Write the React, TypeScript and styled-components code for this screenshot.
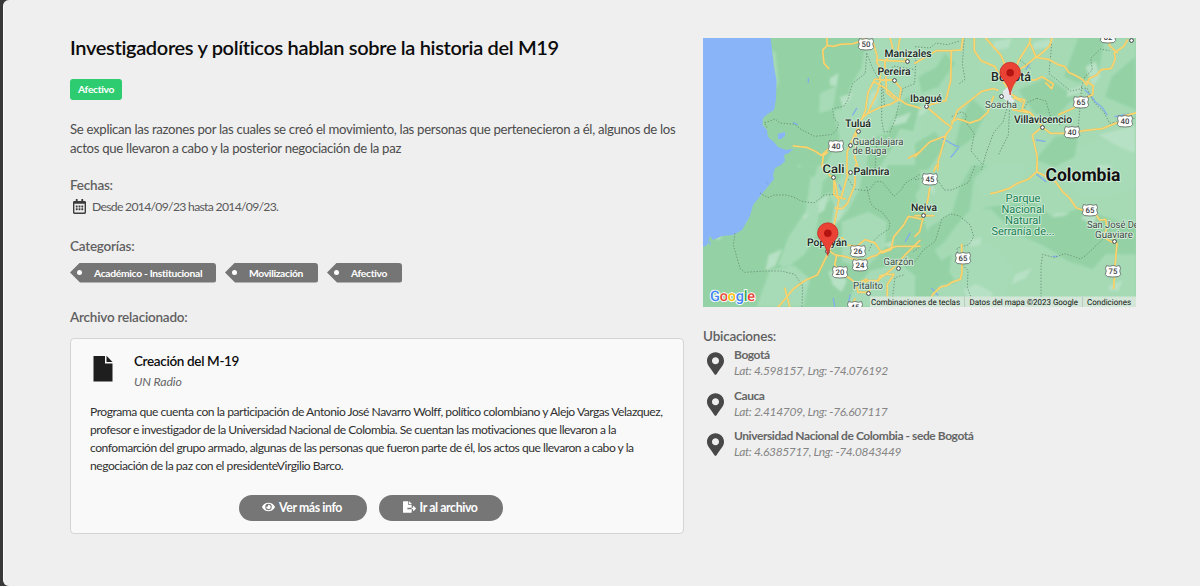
import React from "react";
import styled, { createGlobalStyle } from "styled-components";
import { FaEye, FaFileExport, FaMapMarkerAlt, FaRegCalendarAlt } from "react-icons/fa";

const GlobalStyle = createGlobalStyle`
  * { box-sizing: border-box; }
  body { margin: 0; background: #383838; font-family: Lato, "Liberation Sans", sans-serif; overflow: hidden; }
  h1, h2, h3, p { margin: 0; }
`;

const Panel = styled.main`
  display: grid;
  grid-template-columns: 614px 433px;
  column-gap: 19px;
  align-items: start;
  height: 586px;
  margin-left: 3px;
  padding: 38px 0 0 66px;
  border-radius: 6px 0 0 6px;
  border-left: 1px solid #fafafa;
  background: #efefef;
`;

const Column = styled.section`
  display: flex;
  flex-direction: column;
  align-items: flex-start;
`;

const Title = styled.h1`
  height: 20px;
  font-size: 20px;
  line-height: 19px;
  font-weight: 600;
  letter-spacing: -0.34px;
  white-space: nowrap;
  color: #0c0c0c;
`;

const Badge = styled.span`
  height: 21px;
  margin-top: 20.5px;
  padding: 0 8px;
  border-radius: 3px;
  background: #2ecc71;
  color: #fff;
  font-size: 10.3px;
  font-weight: 700;
  letter-spacing: -0.3px;
  line-height: 21px;
`;

const Description = styled.p`
  margin-top: 20px;
  font-size: 13.2px;
  line-height: 19px;
  letter-spacing: -0.31px;
  white-space: nowrap;
  color: #4c4c4c;
`;

const Heading = styled.h2<{ $top: number }>`
  margin-top: ${(p) => p.$top}px;
  font-size: 13.5px;
  line-height: 18px;
  font-weight: 600;
  letter-spacing: -0.22px;
  color: #606060;
`;

const Dates = styled.div`
  display: flex;
  align-items: center;
  gap: 6px;
  height: 22px;
  margin-top: 1px;
  padding-left: 3px;
  font-size: 12.2px;
  letter-spacing: -0.7px;
  color: #5a5a5a;
  svg { width: 13px; height: 15px; color: #3c3c3c; }
`;

const Tags = styled.div`
  display: flex;
  gap: 9px;
  margin-top: 8px;
`;

const TagShape = styled.span<{ $width: number }>`
  display: flex;
  align-items: center;
  width: ${(p) => p.$width}px;
  height: 20px;
  padding-left: 7px;
  border-radius: 3px;
  background: #757575;
  clip-path: polygon(0 50%, 10px 0, 100% 0, 100% 100%, 10px 100%);
  color: #fff;
  font-size: 10.3px;
  font-weight: 700;
  letter-spacing: -0.31px;
  white-space: nowrap;
`;

const TagHole = styled.i`
  width: 5px;
  height: 5px;
  margin-right: 12px;
  border-radius: 50%;
  background: #fff;
`;

const Card = styled.article`
  width: 614px;
  height: 196px;
  margin-top: 12px;
  padding: 12px 19px;
  border: 1px solid #d4d4d5;
  border-radius: 4px;
  background: #f9f9f9;
`;

const CardHead = styled.header`
  display: flex;
  gap: 21px;
  padding-left: 3px;
  svg { margin-top: 4px; }
`;

const CardTitle = styled.h3`
  font-size: 13.5px;
  line-height: 20px;
  font-weight: 600;
  letter-spacing: -0.34px;
  color: #0c0c0c;
`;

const Source = styled.p`
  margin-top: 1px;
  font-size: 12.3px;
  line-height: 20px;
  letter-spacing: -0.15px;
  font-style: italic;
  color: #666;
`;

const CardText = styled.p`
  margin-top: 11px;
  font-size: 12.1px;
  line-height: 18.25px;
  letter-spacing: -0.48px;
  white-space: nowrap;
  color: #303030;
`;

const Actions = styled.footer`
  display: flex;
  justify-content: center;
  gap: 12px;
  margin-top: 19px;
  padding-right: 12px;
`;

const PillButton = styled.button<{ $width: number }>`
  display: flex;
  align-items: center;
  justify-content: center;
  gap: 4px;
  width: ${(p) => p.$width}px;
  height: 26px;
  padding: 0 2px 1px 0;
  border: 0;
  border-radius: 13px;
  background: #767676;
  color: #fff;
  font-family: inherit;
  font-size: 12.3px;
  font-weight: 700;
  letter-spacing: -0.4px;
  white-space: nowrap;
  svg { width: 13px; height: 12px; }
`;

const MapFrame = styled.svg`
  display: block;
  width: 433px;
  height: 269px;
  text-rendering: geometricPrecision;
`;

const Places = styled.ul`
  display: flex;
  flex-direction: column;
  gap: 6.5px;
  margin: 1px 0 0;
  padding: 0 0 0 4px;
  list-style: none;
`;

const Place = styled.li`
  display: flex;
  align-items: center;
  gap: 10px;
  height: 34px;
  svg { width: 17px; height: 23px; margin-top: 1px; color: #484848; }
`;

const PlaceName = styled.div`
  font-size: 12px;
  line-height: 16px;
  font-weight: 700;
  letter-spacing: -0.43px;
  color: #666;
`;

const Coordinates = styled.div`
  font-size: 12px;
  line-height: 16px;
  letter-spacing: -0.35px;
  font-style: italic;
  color: #858585;
`;

const categories = [
  { name: "Académico - Institucional", width: 146 },
  { name: "Movilización", width: 93 },
  { name: "Afectivo", width: 75 },
];

const places = [
  { name: "Bogotá", position: "Lat: 4.598157, Lng: -74.076192" },
  { name: "Cauca", position: "Lat: 2.414709, Lng: -76.607117" },
  { name: "Universidad Nacional de Colombia - sede Bogotá", position: "Lat: 4.6385717, Lng: -74.0843449" },
];

type Sheet = {
  x: number;
  y: number;
  dark: string;
  light: string;
  pale: string;
  rivers: string;
  roads: string;
  borders: string;
};

// Terrain, roads and borders, drawn sheet by sheet at three times the map size.
const sheets: Sheet[] = [
  {
    x: -3,
    y: -8,
    dark: "M610 210l35-26 15 40-20 80-40-8-32 70-20-8 25-80zM510 330l45-20 30 30-50 78-38 0z",
    light:
      "M500 22l-15 90-35 60-10 60-40 10 20 80-30 55-22 43H660V22zM360 190l50-22-12 70-40 12zM215 60l12 8 8 90-8 20z",
    pale: "M390 145l25-15-5 38-20-2zM512 190l30-14-16 50-24 12zM585 265l48-18-15 30-45 12zM420 200l40-10-30 50z",
    rivers: "M325 145v12M280 278l12 6M470 235l-12 20",
    roads:
      "M380 22l2 24-14 14 4 40 14 16M381 46l20 3 20-6 40-2 20-8 18-10M520 40l12 40-2 16 14 22-5 30-15 0-20 40-8 55-36 80-18 40-2 70M541 150l-8 35-30 65-16 14-18 44-4 76 10 30M530 90l90 5M541 150l40 0 22 25-5 35-42-35-34-20M598 208l-25 14-33 10-40 20M598 208l20 14 42 12M570 22l10 40-26 34 4 52 2 40 25 20M600 22l-6 36 25 32M280 348l40 4 26 12 18 12 25-22M382 368l-12 8-4 35M660 366l-34 18",
    borders:
      "M500 70l-4 60-38 30-15 50-10 18-35 8 4 30 14 14-6 20-16 14-50 5-40-20-20-16-44-4-15-12-12 5-20 6 10 18M500 70l18 45 30 55 6 60M545 170v100l6 35 20 0 16-40 12-55 10-35 35-14 5-100M550 150l30-42 60 10M530 340l-5 78",
  },
  {
    x: 212,
    y: -8,
    dark:
      "M10 140l55-30 25-40 30 30-50 70-50 20zM140 260l30-55 45 40-40 80-60 40zM310 180l90-38 80 60-60 60-60-10zM490 22h80l-20 110-60 28-44-20zM660 80l-70 60-20 60 92 40zM0 340l60-35 30 40-50 75H0zM420 320l70-10-10 70-60 30-60-20z",
    light: "M190 90l40-5 10 30-30 20zM480 360l60-26 120-14v100H430l10-35z",
    pale:
      "M15 230l44-18-30 38-20 10zM235 35l55-12-10 30-45 10zM512 110l30-15 14 45-24 30zM550 315l110-28v82l-45-18zM460 180l45-14-10 22-40 14zM360 35l60-10-20 28-54 5z",
    rivers:
      "M345 100l-12 18M510 180l15 14 16 22 20 16 15 22M600 260l42-8M364 330l26 4M80 325l16 8 24 14 12 3M130 355l-22 26",
    roads:
      "M0 100l30-18 34-20 45 0 30-2 5-38M109 62l-2 90-15 60-58 15M34 230l54 46 22 16-16 20-24 80-2 28M0 380l44-44 48-18M110 284l18-44 42-32 30-24 34-8 14 4M110 275l18-8 16 4 20 8 30-10 24-22 18-48M178 22v40l20 30 42 18 20 38 20 30M210 22l30 34 18 20 12 30 0 40 15 30M285 190l12-40 12-55 34-55 4-18M345 40l18 40-28 25-20 12-20 50M363 82l20-14 22-22 6-24M363 82l38 6 28 16 20 5 12 18 22 10 20 12 12 16 8-20 22-10 14-16 30-4 12-28-3-18 28-20 12-19M585 22l-2 24 23 22M515 154l20 14-2 26-18 8M495 200l-18 34-46 20M285 190l24 15 20 5-8 28 25 10 20 24 16 17M320 215l-22-12-14 16 10 20 45 9M315 150l46 0 20-10 34 22-5 14-18-18M382 290l-30 26 14 60 1 44M382 290l24 20 70 0 30-8 56-6 44-18M480 310l-3-6M634 275l-5-18 33-8",
    borders:
      "M148 22l-6 80 8 46-18 14M0 50l45 4 18-15 34 5 40-12M315 90l32 25M410 42l-8 90 24 18 42 34 30-8 18-2 20 42 30 30 18 34 78-16M500 170l-5 60-5 60M500 170l10-30 22-20-5-35 30-28 26 5M280 220l-16 56-28 32-22 60-15 52M285 205l-5 110-30 60M365 205l28 8 18 64 26 6M365 205l-28 12-15 30M110 260l30-15 15 10-5 18 28 38-10 52 32 38",
  },
  {
    x: -3,
    y: 127,
    dark:
      "M360 150l34-50 20 40-30 90-20 5zM560 0l100 0 0 70-30 40-40-20-20-30zM620 190l40-25v90l-35 20-22-25zM420 340l35 10-10 40-40 20zM300 0l55 0-10 34-40 10z",
    light:
      "M290 0l42 40-16 100-50 76-30 80 20 15 55-40 35-55 14-90 8-76 50-50zM440 0l52 0-15 75-35 65-50 55-10-85zM425 170l80-30 55 30-5 80-58 60-70-20zM210 315l70-14 50 40-20 84H170zM510 318l88-24 62 50v81H440l20-50z",
    pale: "M310 150l16-8-6 16-12 5zM355 110l34-28-16 54-16 10zM405 120l30 5-15 38-25 20zM40 218l28-8-10 15zM206 270l40-18-20 50-30 16zM385 320l35-10 20 40-15 30-26-20zM550 240l32-14-8 24zM300 350l22-8-5 15z",
    rivers: "M630 204l-14 26M418 60l5 14M200 50l4 8M450 390l-5 28M400 400l4 24",
    roads:
      "M372 0l2 12 16 20 12 8 0 48 15 16-8 42-8 40-5 54-14 30-30 60-40 18-32 24-50 60-12 34M405 50l8 44 22 8M440 0l3 30-20 70M467 0l-3 62-22 54-16 15-20-2M384 250l8-14 35-18 14 22 30 4 24-20 30 10 12 18 8 12 28-10 8-38 30-36 14-26 38 8M384 256l22 14 28 4 24 8 36 5 20-12 16-4 14-12M410 270l-6 30 18 18M422 322l30 20 18 14 30-14M504 382l28-35 30-24 22-18 30-34 46-45M540 262l48-18 72 0M504 382l-30 0-4-20 34-15 32 0 4-14 18-5 24 0-20 30 0 66M255 370l14 55M465 402l-10 22",
    borders:
      "M180 84l24 14 18-8 34 0 22 5 28 14 36 5 16-12 14-12 30-2M105 205l-5 35 20 70 14 12 60-4 50 0 40 10 24 35-2 62M500 65l12 50 12 14 22 12 24 30-2 20-30 20-20 20-12 28M440 35l26 38 40 5 20-28 20 0 36 44 24-22 8-16 46-28M610 330l-25 8-10 80M640 260l20-15",
  },
  {
    x: 212,
    y: 127,
    dark:
      "M0 260l45-75 65-40 24-80 38-65 45 0-40 40-12 95-40 45-40 55L0 300zM195 130l70-10 90-10 60 48 80-30 168 60v80l-90 0-40 45-75-25-70-45-90-40-70-70zM0 340l50-35 60-38-8 65-60 70H0z",
    light:
      "M178 50l60-50h90l-12 65-110 30zM460 45l50-10 150-35v70l-80 20-80 10zM170 230l65 10 62 70-30 65 55 50H40l34-65 70-10z",
    pale: "M45 55l16 18-5 18-14-20zM500 155l48-12-10 34-38-14zM300 328l52-20-20 32-42 18zM145 375l40-18 50 28-18 30-55-3zM165 225l35-8-5 24-36 5zM422 145l42 0-20 8-32 2zM580 365l42-20-10 32-26 0zM510 20l20 3-5 20-15 2zM545 0l50 0-38 20z",
    rivers: "M365 28l28 22M415 274l12 0M50 370l18 20",
    roads:
      "M65 0l-8 18M44 70l-5 32-12 50M0 152l56 0M26 152l-12 48-14 14M365 0v20l-24 22-36 14-22 14-38 12-18 4M365 20l36 18 22 14 20 28 20 18 20 30 22 8M540 145l14 20 18-2 4 24-10 30 24 14 16 4-6 70-4 65M596 220l2 15M140 238l1 85-5 20-24 8-15 10-20 5-22 20-18 34",
    borders:
      "M0 44l25-5M68 45l20 30 22 0 50-22 20-50M0 290l25-35 36-26 20-68 25-14 26 5 34 28 10 34-14 25-36 10 5 38 28 30-2 50 25 68M378 423l0-120 5-35 35 10 30-12 28 8 20 8 18-12 50-48 32-8",
  },
];

const roadShields = [
  [163, 6, 50], [133, 108, 40], [378, 64, 65], [422, 83, 40], [369, 94, 40], [227, 141, 45],
  [155, 213, 26], [157, 227, 24], [137, 234, 20], [260, 220, 65], [387, 172, 65], [410, 233, 75],
  [405, -1, 62], [152, 269, 45],
];

const towns = [
  [204, 23], [191, 42], [155, 93], [147, 107], [130, 139], [147, 134], [223, 68], [298, 58],
  [339, 89], [220, 177], [165, 255], [195, 230], [411, 203], [428, 2], [124, 213],
];

const labels: { x: number; y: number; size: number; text: string; weight?: number; width: number; color?: string }[] = [
  { x: 205, y: 18.5, size: 10.5, text: "Manizales", weight: 500, width: 47 },
  { x: 191, y: 37, size: 10.5, text: "Pereira", weight: 500, width: 33 },
  { x: 223, y: 63.5, size: 10.5, text: "Ibagué", weight: 500, width: 32 },
  { x: 155, y: 89, size: 10.5, text: "Tuluá", weight: 500, width: 26 },
  { x: 175, y: 106.5, size: 10, text: "Guadalajara", width: 51, color: "#3d4a43" },
  { x: 166.5, y: 116, size: 10, text: "de Buga", width: 34, color: "#3d4a43" },
  { x: 130.5, y: 134.5, size: 12, text: "Cali", weight: 500, width: 22 },
  { x: 168.5, y: 137, size: 10.5, text: "Palmira", weight: 500, width: 36 },
  { x: 308, y: 42.5, size: 12.5, text: "Bogotá", weight: 500, width: 40 },
  { x: 298, y: 69.5, size: 10, text: "Soacha", width: 32, color: "#3d4a43" },
  { x: 340, y: 84.5, size: 10.5, text: "Villavicencio", weight: 500, width: 58 },
  { x: 380, y: 142.5, size: 18, text: "Colombia", weight: 700, width: 75, color: "#111" },
  { x: 221, y: 172.5, size: 10.5, text: "Neiva", weight: 500, width: 26 },
  { x: 124, y: 208, size: 10.5, text: "Popayán", weight: 500, width: 40 },
  { x: 195.5, y: 227, size: 10, text: "Garzón", width: 30, color: "#3d4a43" },
  { x: 165, y: 250.5, size: 10, text: "Pitalito", width: 30, color: "#3d4a43" },
  { x: 320, y: 164, size: 11.3, text: "Parque", width: 35, color: "#188052" },
  { x: 320, y: 175, size: 11.3, text: "Nacional", width: 43, color: "#188052" },
  { x: 320, y: 186, size: 11.3, text: "Natural", width: 36, color: "#188052" },
  { x: 320, y: 197, size: 11.3, text: "Serranía de...", width: 63, color: "#188052" },
  { x: 411, y: 190, size: 10, text: "San José Del", width: 54, color: "#3d4a43" },
  { x: 411, y: 199.5, size: 10, text: "Guaviare", width: 38, color: "#3d4a43" },
];

const sheetTransform = (s: Sheet) => `translate(${s.x} ${s.y}) scale(.33333)`;

function Pin({ x, y }: { x: number; y: number }) {
  return (
    <g transform={`translate(${x} ${y})`}>
      <path
        d="M0 0C-1.4-8-3.4-10.5-6-14.2-8.2-16.5-10.2-18.5-10.2-22.5a10.2 10.2 0 0 1 20.4 0c0 4-2 6-4.2 8.3C3.4-10.5 1.4-8 0 0Z"
        fill="#ea4335"
        stroke="#c5221f"
        strokeWidth=".7"
      />
      <circle cy="-22.3" r="3.8" fill="#b31412" />
    </g>
  );
}

function LocationMap() {
  return (
    <MapFrame viewBox="0 0 433 269" role="img" aria-label="Mapa">
      <defs>
        <filter id="relief" x="0" y="0" width="100%" height="100%">
          <feGaussianBlur stdDeviation="1.2" />
        </filter>
      </defs>
      <rect width="433" height="269" fill="#94d2a5" />
      <g filter="url(#relief)">
        <path d="M165 0H433V269H270L230 210 210 150 145 110z" fill="#a5dab5" />
        {sheets.map((s) => (
          <g key={`land${s.x},${s.y}`} transform={sheetTransform(s)}>
            <path d={s.light} fill="#a7dbb7" />
            <path d={s.dark} fill="#94d2a5" />
            <path d={s.pale} fill="#b7e1c4" />
          </g>
        ))}
      </g>
      <path
        d="M0 0H67.700L69 12 71 29 73.500 42 73 61 71 72 66 75 60 80 59.500 87 64 92 65 99 71 104 75 109 83 112 90 111 86 115 81 117 82 123 78 127 72 130 70 137 71 141 58 157 50 167 47 178 39 192 30 197 19 198 10 202 7 198 4 207 0 209Z"
        fill="#8ab4f8"
      />
      <path d="M75 96l7-2 0 4-4 3-3 0zM5 205l2-3 1 5" fill="#8ab4f8" />
      {sheets.map((s) => (
        <g key={`line${s.x},${s.y}`} transform={sheetTransform(s)} fill="none" strokeLinejoin="round" strokeLinecap="round">
          <path d={s.rivers} stroke="#7faee9" strokeWidth="4" />
          <path d={s.borders} stroke="#668b73" strokeWidth="2.6" strokeDasharray="4 5" strokeLinecap="butt" />
          <path d={s.roads} stroke="#e5bd55" strokeWidth="5.2" />
          <path d={s.roads} stroke="#fbd675" strokeWidth="4" />
        </g>
      ))}
      <path d="M300 53l6-5 3 5-1 6 4 4-5 3-7-6z" fill="#e4e8eb" />
      <g fill="#fff" stroke="#3c4043" strokeWidth="1">
        {towns.map(([x, y]) => (
          <circle key={`${x},${y}`} cx={x + 0.5} cy={y + 0.5} r="1.9" />
        ))}
      </g>
      <g fontFamily="Roboto, sans-serif" textAnchor="middle">
        {roadShields.map(([x, y, n]) => (
          <g key={`${x},${y}`} transform={`translate(${x} ${y})`}>
            <path
              d="M-6.500-5.500l3 .8L0-5.500l3.500.8 3-.8 1 3-.8 2.500 1 3.500-2 2L0 6l-5.700-.5-2-2 1-3.500-.8-2.500z"
              fill="#fff"
              stroke="#59635d"
              strokeWidth=".8"
            />
            <text y="2.900" fontSize="7.800" fontWeight="500" fill="#3c4043">{n}</text>
          </g>
        ))}
        {labels.map((l) => (
          <text
            key={l.text}
            x={l.x}
            y={l.y}
            fontSize={l.size}
            fontWeight={l.weight ?? 400}
            textLength={l.width}
            lengthAdjust="spacingAndGlyphs"
            fill={l.color ?? "#202623"}
            stroke="#d3eddb"
            strokeWidth="1.800"
            strokeLinejoin="round"
            paintOrder="stroke"
          >
            {l.text}
          </text>
        ))}
      </g>
      <Pin x={307.2} y={57} />
      <Pin x={124.8} y={217.5} />
      <text x="7" y="263" fontFamily="Roboto, sans-serif" fontSize="14.500" fontWeight="500" textLength="45" stroke="#fff" strokeWidth="1.800" paintOrder="stroke">
        <tspan fill="#4285f4">G</tspan>
        <tspan fill="#ea4335">o</tspan>
        <tspan fill="#fbbc04">o</tspan>
        <tspan fill="#4285f4">g</tspan>
        <tspan fill="#34a853">l</tspan>
        <tspan fill="#ea4335">e</tspan>
      </text>
      <path d="M167 258.500H433V269H167z" fill="#d3e6d8" />
      <path d="M261.500 258.500V269M379.500 258.500V269" stroke="#b9cbbe" />
      <g fontFamily="Roboto, sans-serif" fontSize="8.200" fill="#111">
        <text x="168" y="266.500" textLength="89" lengthAdjust="spacingAndGlyphs">Combinaciones de teclas</text>
        <text x="266.500" y="266.500" textLength="108.500" lengthAdjust="spacingAndGlyphs">Datos del mapa ©2023 Google</text>
        <text x="384" y="266.500" textLength="44" lengthAdjust="spacingAndGlyphs">Condiciones</text>
      </g>
    </MapFrame>
  );
}

function FileIcon() {
  return (
    <svg width="20" height="27" viewBox="0 0 20 27" fill="#1e1e1e">
      <path d="M.5 1H12V8.500H19.500V26.500H.5z" />
      <path d="M13.500.8 19.500 7H13.500z" />
    </svg>
  );
}

export default function App() {
  return (
    <>
      <GlobalStyle />
      <Panel>
        <Column>
          <Title>Investigadores y políticos hablan sobre la historia del M19</Title>
          <Badge>Afectivo</Badge>
          <Description>
            Se explican las razones por las cuales se creó el movimiento, las personas que pertenecieron a él, algunos de los
            <br />
            actos que llevaron a cabo y la posterior negociación de la paz
          </Description>
          <Heading $top={18.5}>Fechas:</Heading>
          <Dates>
            <FaRegCalendarAlt />
            Desde 2014/09/23 hasta 2014/09/23.
          </Dates>
          <Heading $top={19.5}>Categorías:</Heading>
          <Tags>
            {categories.map((c) => (
              <TagShape key={c.name} $width={c.width}>
                <TagHole />
                {c.name}
              </TagShape>
            ))}
          </Tags>
          <Heading $top={25}>Archivo relacionado:</Heading>
          <Card>
            <CardHead>
              <FileIcon />
              <div>
                <CardTitle>Creación del M-19</CardTitle>
                <Source>UN Radio</Source>
              </div>
            </CardHead>
            <CardText>
              Programa que cuenta con la participación de Antonio José Navarro Wolff, político colombiano y Alejo Vargas Velazquez,
              <br />
              profesor e investigador de la Universidad Nacional de Colombia. Se cuentan las motivaciones que llevaron a la
              <br />
              confomarción del grupo armado, algunas de las personas que fueron parte de él, los actos que llevaron a cabo y la
              <br />
              negociación de la paz con el presidenteVirgilio Barco.
            </CardText>
            <Actions>
              <PillButton $width={128}>
                <FaEye />
                Ver más info
              </PillButton>
              <PillButton $width={124}>
                <FaFileExport />
                Ir al archivo
              </PillButton>
            </Actions>
          </Card>
        </Column>
        <Column>
          <LocationMap />
          <Heading $top={20}>Ubicaciones:</Heading>
          <Places>
            {places.map((p) => (
              <Place key={p.name}>
                <FaMapMarkerAlt />
                <div>
                  <PlaceName>{p.name}</PlaceName>
                  <Coordinates>{p.position}</Coordinates>
                </div>
              </Place>
            ))}
          </Places>
        </Column>
      </Panel>
    </>
  );
}
